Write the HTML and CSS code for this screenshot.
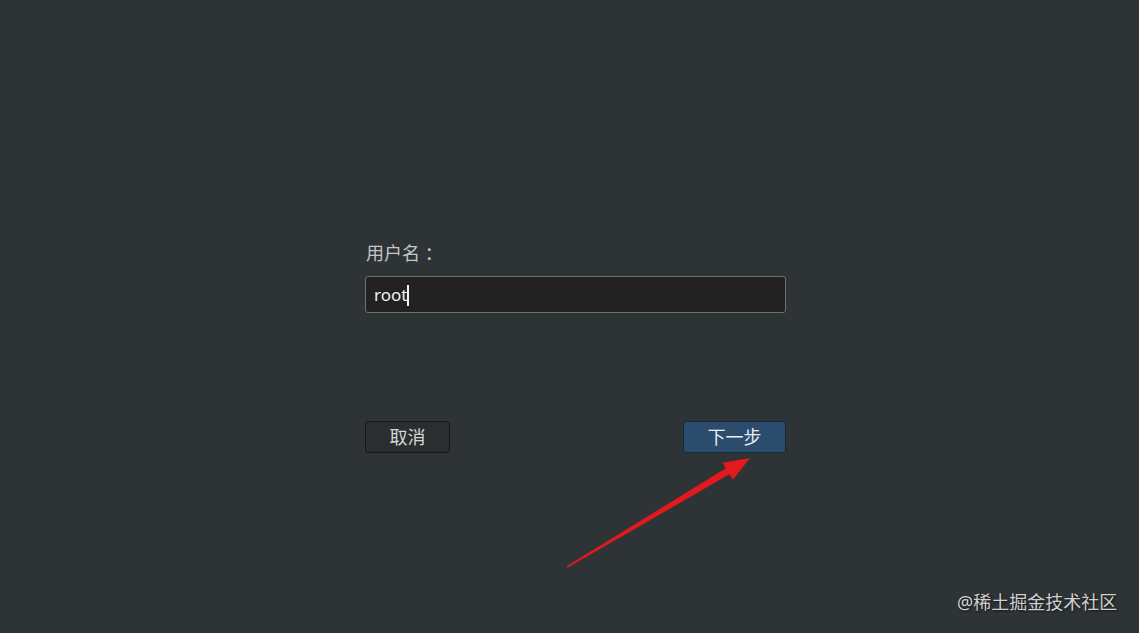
FILE: index.html
```html
<!DOCTYPE html>
<html lang="zh">
<head>
<meta charset="utf-8">
<link rel="stylesheet" href="styles.css">
</head>
<body>
<main class="screen">
  <form class="login">
    <label class="label" for="user">用户名 ：</label>
    <div class="field"><span class="value">root</span><span class="caret"></span></div>
    <div class="actions">
      <button type="button" class="btn btn-cancel">取消</button>
      <button type="button" class="btn btn-next">下一步</button>
    </div>
  </form>
  <svg class="arrow" width="200" height="130" viewBox="0 0 200 130">
    <polygon points="5.6,115.3 164.9,17.3 161.6,11.8 189,7 172.0,28.8 168.5,23.3 6.4,116.7" fill="#e3191e"/>
  </svg>
  <div class="watermark">@稀土掘金技术社区</div>
</main>
</body>
</html>
```

FILE: styles.css
```css
html, body {
  margin: 0;
  padding: 0;
  height: 100%;
  background: #2e3436;
  overflow: hidden;
}
.screen {
  position: relative;
  width: 1139px;
  height: 633px;
  font-family: "Noto Sans", "Noto Sans CJK SC", sans-serif;
}
.login {
  display: flex;
  flex-direction: column;
  width: 421px;
  padding: 240px 0 0 365px;
}
.label {
  color: #c4c7c7;
  font-size: 18px;
  line-height: 26px;
  padding-left: 1px;
}
.field {
  margin-top: 10px;
  box-sizing: border-box;
  height: 37px;
  border: 1px solid #6b7071;
  border-radius: 3px;
  background: #222222;
  display: flex;
  align-items: center;
  padding: 0 0 0 8px;
}
.value {
  color: #f0f0f0;
  font-size: 17px;
  line-height: 20px;
  margin-top: 1px;
}
.caret {
  width: 2px;
  height: 21px;
  background: #f4f4f4;
  margin-top: 1px;
}
.actions {
  display: flex;
  justify-content: space-between;
  margin-top: 108px;
}
.btn {
  font-family: "Noto Sans", "Noto Sans CJK SC", sans-serif;
  font-size: 18px;
  height: 32px;
  padding: 0;
  border-radius: 3px;
  line-height: 28px;
  cursor: default;
}
.btn-cancel {
  width: 85px;
  background: #2a2e2f;
  border: 1px solid #161819;
  color: #d4d6d6;
}
.btn-next {
  width: 103px;
  background: #2c4c6e;
  border: 1px solid #17293d;
  color: #e8ecf0;
}
.arrow {
  position: absolute;
  left: 561px;
  top: 451px;
}
.watermark {
  position: absolute;
  left: 957px;
  top: 589px;
  font-size: 18px;
  line-height: 26px;
  color: #cfd1d1;
  text-shadow: 1px 1px 2px #111;
}
```
